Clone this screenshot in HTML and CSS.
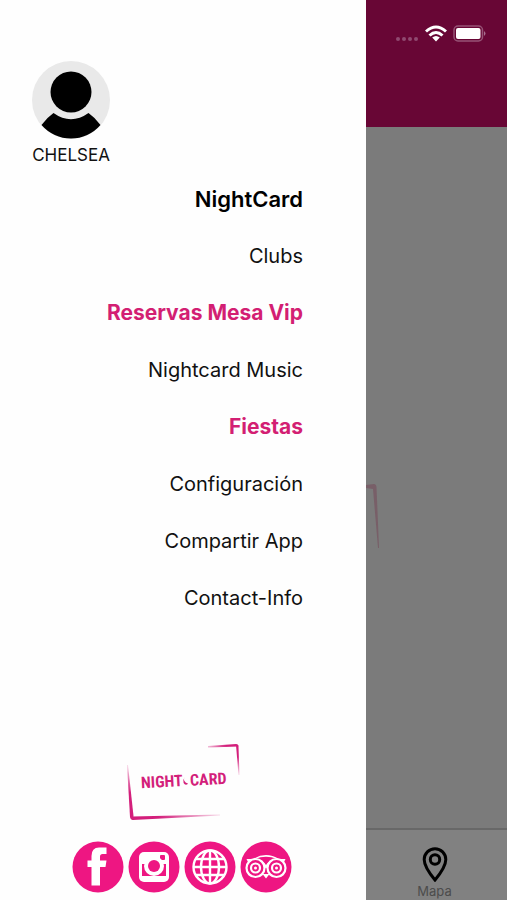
FILE: index.html
```html
<!DOCTYPE html>
<html lang="es">
<head>
<meta charset="utf-8">
<meta name="viewport" content="width=device-width, initial-scale=1">
<title>NightCard</title>
<link rel="stylesheet" href="styles.css">
</head>
<body>
<div class="app">
  <aside class="drawer">
    <div class="profile">
      <svg class="avatar" viewBox="0 0 78 78" aria-hidden="true">
        <circle cx="39" cy="39" r="39" fill="#e9e9e9"/>
        <circle cx="39" cy="31" r="20.5"/>
        <path d="M21.5 52Q39 64.500 56.500 52Q63 56.500 68.500 64A39 39 0 0 1 9.500 64Q15 56.500 21.500 52Z"/>
      </svg>
      <span class="name">CHELSEA</span>
    </div>
    <nav class="menu">
      <a class="strong" href="#nightcard">NightCard</a>
      <a href="#clubs">Clubs</a>
      <a class="strong accent" href="#reservas">Reservas Mesa Vip</a>
      <a href="#music">Nightcard Music</a>
      <a class="strong accent" href="#fiestas">Fiestas</a>
      <a href="#config">Configuración</a>
      <a href="#compartir">Compartir App</a>
      <a href="#contact">Contact-Info</a>
    </nav>
    <footer class="foot">
      <svg class="logo" viewBox="0 0 114 78">
        <defs>
          <linearGradient id="up" x1="0" y1="1" x2="0" y2="0"><stop offset=".5" stop-color="#d31f7b"/><stop offset="1" stop-color="#d31f7b" stop-opacity=".15"/></linearGradient>
          <linearGradient id="right"><stop offset=".3" stop-color="#d31f7b"/><stop offset="1" stop-color="#d31f7b" stop-opacity=".15"/></linearGradient>
          <linearGradient id="left" x1="1" x2="0"><stop offset=".4" stop-color="#d31f7b"/><stop offset="1" stop-color="#d31f7b" stop-opacity=".3"/></linearGradient>
          <linearGradient id="down" x1="0" y1="0" x2="0" y2="1"><stop offset=".4" stop-color="#d31f7b"/><stop offset="1" stop-color="#d31f7b" stop-opacity=".15"/></linearGradient>
        </defs>
        <path fill="url(#up)" d="M1 22L2 22L7.500 73L7 77Q4.500 77 4 74Z"/>
        <path fill="url(#right)" d="M6 73.500L94 71.500L94 72.500L7 77Q5 76 6 73.500Z"/>
        <path fill="url(#left)" d="M82 3L110 1Q112.500 1 112.500 3.500L82 4.500Z"/>
        <path fill="url(#down)" d="M110 2Q112.500 1 112.500 4L113.500 32L112.500 32Z"/>
        <g transform="rotate(-3 58 38)" fill="#d31f7b">
          <text class="wordmark" x="15" y="43">NIGHT</text>
          <path d="M59 34Q56 38 62 41Q59 43 57.500 40Q56.500 37 59 34Z"/>
          <text class="wordmark" x="64" y="43">CARD</text>
        </g>
      </svg>
      <div class="social">
        <a href="#facebook" aria-label="Facebook"><svg viewBox="0 0 52 52"><circle cx="26" cy="26" r="25.500" fill="#ee1682"/><path fill="#fff" d="M19.500 44.500V26H15.500V19.500H19.500V15Q19.500 6.500 27 6.500H34.500V13H30.500Q28 13 28 15.500V19.500H34.500L33.500 26H28V44.500Z"/></svg></a>
        <a href="#instagram" aria-label="Instagram"><svg viewBox="0 0 52 52"><circle cx="26" cy="26" r="25.500" fill="#ee1682"/><rect x="11" y="11" width="30" height="30" rx="5" fill="#fff"/><path fill="#ee1682" d="M14 23H38V35Q38 38 35 38H17Q14 38 14 35Z"/><rect x="32" y="14" width="5" height="5" rx="1" fill="#ee1682"/><circle cx="26" cy="25" r="10" fill="#fff"/><path fill="#fff" d="M17 20H35V24H17ZM14 35H38V38H14Z"/><circle cx="26" cy="25" r="6" fill="#ee1682"/></svg></a>
        <a href="#web" aria-label="Web"><svg viewBox="0 0 52 52"><circle cx="26" cy="26" r="25.500" fill="#ee1682"/><g fill="none" stroke="#fff" stroke-width="2.400"><circle cx="26" cy="26" r="16.500"/><ellipse cx="26" cy="26" rx="9" ry="16.500"/><path d="M26 9V43M9 26H43M12 18H40M12 34H40"/></g></svg></a>
        <a href="#tripadvisor" aria-label="Tripadvisor"><svg viewBox="0 0 52 52"><circle cx="26" cy="26" r="25.500" fill="#ee1682"/><path fill="#fff" d="M6.500 18H13Q26 10 39 18H45.500L43 23L26 27L9 23Z"/><path fill="#ee1682" d="M15 18Q26 13.500 37 18Q29 19 26 24Q23 19 15 18Z"/><g fill="#ee1682" stroke="#fff" stroke-width="2.200"><circle cx="15.500" cy="27" r="9"/><circle cx="36.500" cy="27" r="9"/><circle cx="15.500" cy="27" r="4.500"/><circle cx="36.500" cy="27" r="4.500"/></g><path fill="#fff" d="M22.500 33H29.500L26 37.500ZM14 27a1.500 1.500 0 1 0 3 0a1.500 1.500 0 1 0-3 0M35 27a1.500 1.500 0 1 0 3 0a1.500 1.500 0 1 0-3 0"/></svg></a>
      </div>
    </footer>
  </aside>
  <main class="page">
    <header class="bar">
      <svg class="dots" viewBox="0 0 24 6"><g fill="#8f4a70"><circle cx="3" cy="3" r="2"/><circle cx="9" cy="3" r="2"/><circle cx="15" cy="3" r="2"/><circle cx="21" cy="3" r="2"/></g></svg>
      <svg class="wifi" viewBox="0 0 22 17"><g fill="none" stroke="#fff" stroke-width="3"><path d="M1 6.500Q11-2.500 21 6.500"/><path d="M4.500 10.500Q11 4.500 17.500 10.500"/></g><path fill="#fff" d="M7.200 12.600Q11 9.200 14.800 12.600L11 16.500Z"/></svg>
      <svg class="battery" viewBox="0 0 33 17"><rect x="1" y="1" width="28.500" height="15" rx="4" fill="none" stroke="#965376" stroke-width="1.500"/><rect x="3" y="3" width="24.500" height="11" rx="2" fill="#fff"/><path fill="#a87090" d="M31 6Q34 8.500 31 11Z"/></svg>
    </header>
    <div class="content">
      <svg class="mark" viewBox="0 0 16 68"><path fill="#785f68" d="M0 1L8 0Q10 0 10.500 3L13 64L12 64L7 5L0 4Z"/></svg>
    </div>
    <footer class="tabs">
      <a class="tab" href="#mapa">
        <svg viewBox="0 0 26 36"><g fill="none" stroke="#000" stroke-width="3"><path d="M13 34Q2.200 21 2.200 13.500A10.800 10.800 0 0 1 23.800 13.500Q23.800 21 13 34Z"/><circle cx="13" cy="13.500" r="4.700"/></g></svg>
        <span>Mapa</span>
      </a>
    </footer>
  </main>
</div>
</body>
</html>
```
FILE: styles.css
```css
* { box-sizing: border-box; }
body { margin: 0; font-family: Inter, "Liberation Sans", sans-serif; color: #111; }
a { color: inherit; text-decoration: none; }
svg { display: block; }
.app { display: grid; grid-template-columns: 366fr 141fr; min-height: 100vh; }
.drawer { display: flex; flex-direction: column; background: #fefefe; padding: 61px 0 7px; }
.profile { display: flex; flex-direction: column; align-items: center; align-self: flex-start; margin-left: 32px; }
.avatar { width: 78px; height: 78px; }
.name { font-size: 17px; line-height: 20px; margin-top: 6px; }
.menu { display: flex; flex-direction: column; align-items: flex-end; gap: 29px; margin-top: 20px; padding-right: 63px; }
.menu a { font-size: 20px; line-height: 28px; }
.menu .strong { font-size: 22px; font-weight: 600; color: #000; }
.menu .accent { font-size: 21px; font-weight: 700; color: #d31f73; }
.foot { display: flex; flex-direction: column; align-items: center; gap: 20px; margin-top: auto; }
.logo { width: 114px; height: 78px; overflow: visible; }
.wordmark { font-family: "Roboto Condensed", Roboto, sans-serif; font-weight: 700; font-size: 16px; }
.social { display: flex; gap: 4px; padding-right: 2px; }
.social svg { width: 52px; height: 52px; }
.page { display: flex; flex-direction: column; background: #7b7b7b; }
.bar { display: flex; align-items: flex-start; justify-content: flex-end; gap: 6px; height: 127px; padding: 25px 21px 0 0; background: #680635; }
.dots { width: 24px; height: 6px; margin-top: 11px; }
.wifi { width: 22px; height: 17px; }
.battery { width: 33px; height: 17px; }
.content { flex: 1; display: flex; align-items: center; }
.mark { width: 16px; height: 68px; margin-top: 80px; }
.tabs { display: flex; justify-content: center; background: #818181; border-top: 2px solid #686868; padding: 16px 4px 0 0; }
.tab { display: flex; flex-direction: column; align-items: center; color: #4c4c4c; font-size: 13px; line-height: 18px; }
.tab svg { width: 26px; height: 36px; }
```
